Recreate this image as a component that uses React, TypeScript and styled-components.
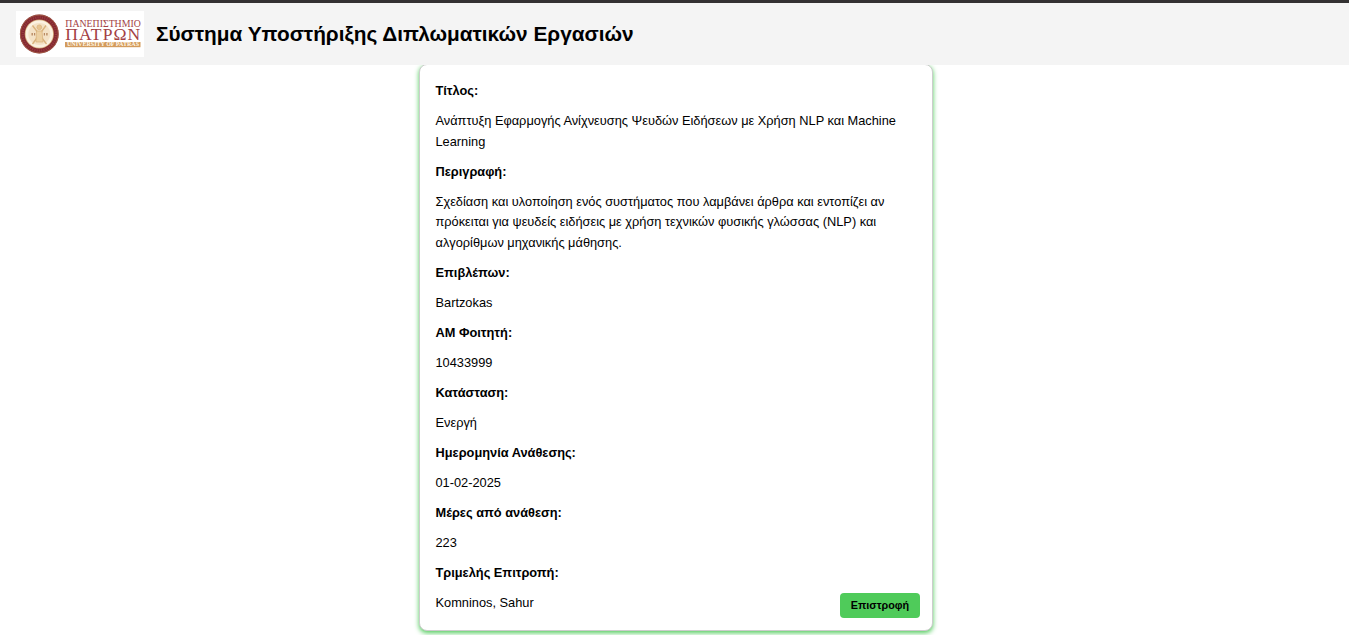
import React from 'react';
import styled, { createGlobalStyle } from 'styled-components';

const GlobalStyle = createGlobalStyle`
  * { box-sizing: border-box; }
  html, body { margin: 0; background: #fff; overflow: hidden; }
  body { font-family: Arial, "Liberation Sans", sans-serif; color: #000; }
`;

const Page = styled.div`
  height: 635px;
  overflow: hidden;
`;

const Header = styled.header`
  position: relative;
  z-index: 1;
  display: flex;
  align-items: center;
  gap: 12px;
  height: 65px;
  padding: 0 16px;
  background: #f4f4f4;
  border-top: 3px solid #333132;
`;

const Logo = styled.svg`
  display: block;
  width: 128px;
  height: 46px;
  flex: none;
`;

const SiteTitle = styled.h1`
  margin: 0;
  font-size: 20.8px;
  line-height: 24px;
  font-weight: 700;
  white-space: nowrap;
`;

const Card = styled.main`
  position: relative;
  width: 514px;
  height: 567px;
  margin: -1px 0 0 419px;
  padding: 16px 16px 0 15.5px;
  border: 1px solid #ccc;
  border-radius: 8px;
  background: #fff;
  box-shadow: 0 2px 5px #4fcb5a;
`;

const Details = styled.dl`
  display: flex;
  flex-direction: column;
  gap: 9.55px;
  margin: 0;
  font-size: 12.8px;
  line-height: 20.48px;
`;

const Label = styled.dt`
  font-weight: 700;
`;

const Value = styled.dd`
  margin: 0;
`;

const BackButton = styled.button`
  position: absolute;
  right: 12px;
  bottom: 12px;
  width: 80px;
  height: 25px;
  padding: 0 0 1px;
  border: 0;
  border-radius: 4px;
  background: #4fcb5a;
  color: #000;
  font: 700 10.8px Arial, "Liberation Sans", sans-serif;
`;

const fields = [
  { label: 'Τίτλος:', lines: ['Ανάπτυξη Εφαρμογής Ανίχνευσης Ψευδών Ειδήσεων με Χρήση NLP και Machine', 'Learning'] },
  {
    label: 'Περιγραφή:',
    lines: [
      'Σχεδίαση και υλοποίηση ενός συστήματος που λαμβάνει άρθρα και εντοπίζει αν',
      'πρόκειται για ψευδείς ειδήσεις με χρήση τεχνικών φυσικής γλώσσας (NLP) και',
      'αλγορίθμων μηχανικής μάθησης.',
    ],
  },
  { label: 'Επιβλέπων:', lines: ['Bartzokas'] },
  { label: 'ΑΜ Φοιτητή:', lines: ['10433999'] },
  { label: 'Κατάσταση:', lines: ['Ενεργή'] },
  { label: 'Ημερομηνία Ανάθεσης:', lines: ['01-02-2025'] },
  { label: 'Μέρες από ανάθεση:', lines: ['223'] },
  { label: 'Τριμελής Επιτροπή:', lines: ['Komninos, Sahur'] },
];

function UniversityLogo() {
  return (
    <Logo viewBox="0 0 128 46" role="img" aria-label="Πανεπιστήμιο Πατρών">
      <rect width="128" height="46" fill="#fff" />
      <circle cx="23.3" cy="23" r="19.4" fill="#842830" />
      <circle cx="23.3" cy="23" r="18.9" fill="none" stroke="#a8664a" strokeWidth="0.8" />
      <circle cx="23.3" cy="23" r="16.6" fill="none" stroke="#b4605a" strokeWidth="2.2" strokeDasharray="1 1.3" opacity="0.4" />
      <circle cx="23.3" cy="23" r="14.6" fill="#d3a878" />
      <circle cx="23.3" cy="23" r="13.8" fill="#fbf1e0" />
      <circle cx="23.3" cy="23" r="11" fill="#f4e2c6" />
      <g stroke="#d9b27c" fill="none" strokeWidth="1.3">
        <path d="M16.5 14.5 L30.5 33 M30 14.5 L16.5 33" />
        <path d="M20.5 20 H26 L27 31 H20 Z" fill="#ecd0a2" strokeWidth="0.7" />
      </g>
      <circle cx="23.3" cy="16.3" r="2.4" fill="#e6c491" stroke="#d9b27c" strokeWidth="0.7" />
      <g fill="#b98a62">
        <path d="M15.5 22h1.4v2.6h-1.4zM18 22h1.2v2.6H18zM27.8 22h1.2v2.6h-1.2zM30.2 22h1.4v2.6h-1.4z" />
      </g>
      <g fill="#a33f45" fontFamily="Liberation Serif, serif">
        <text x="49.3" y="16.3" fontSize="9.6" textLength="75.5" lengthAdjust="spacingAndGlyphs">ΠΑΝΕΠΙΣΤΗΜΙΟ</text>
        <text x="49.3" y="29.3" fontSize="16.6" letterSpacing="1" textLength="76" lengthAdjust="spacingAndGlyphs">ΠΑΤΡΩΝ</text>
      </g>
      <rect x="49" y="31" width="75.5" height="5.2" fill="#d39b5c" />
      <text x="51" y="35.4" fill="#fff8e9" fontFamily="Liberation Serif, serif" fontWeight="700" fontSize="5.2" textLength="72" lengthAdjust="spacingAndGlyphs">UNIVERSITY OF PATRAS</text>
    </Logo>
  );
}

export default function App() {
  return (
    <Page>
      <GlobalStyle />
      <Header>
        <UniversityLogo />
        <SiteTitle>Σύστημα Υποστήριξης Διπλωματικών Εργασιών</SiteTitle>
      </Header>
      <Card>
        <Details>
          {fields.map((field) => (
            <React.Fragment key={field.label}>
              <Label>{field.label}</Label>
              <Value>
                {field.lines.map((line, i) => (
                  <React.Fragment key={line}>
                    {i > 0 && <br />}
                    {line}
                  </React.Fragment>
                ))}
              </Value>
            </React.Fragment>
          ))}
        </Details>
        <BackButton type="button">Επιστροφή</BackButton>
      </Card>
    </Page>
  );
}
